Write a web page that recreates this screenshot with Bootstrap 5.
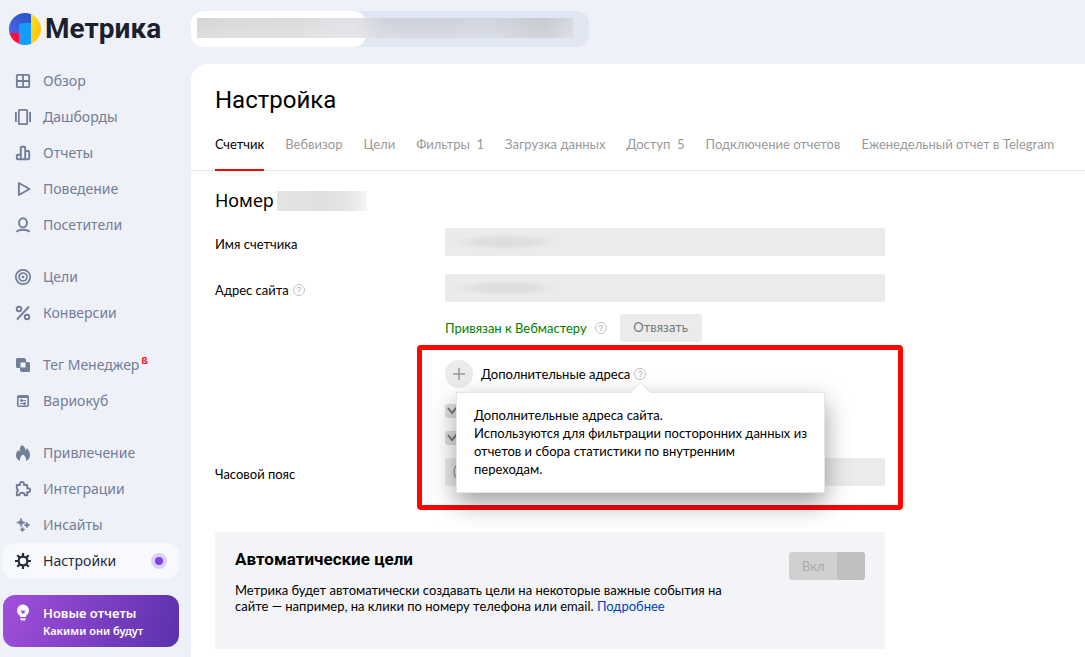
<!DOCTYPE html>
<html lang="ru">
<head>
<meta charset="utf-8">
<meta name="viewport" content="width=device-width, initial-scale=1">
<title>Метрика — Настройка</title>
<link rel="stylesheet" href="https://cdn.jsdelivr.net/npm/bootstrap@5.3.0/dist/css/bootstrap.min.css">
<style>
  body { background: #eef1f7; color: #000; font: 13px/18px Lato, Roboto, sans-serif; }
  a { text-decoration: none; }

  /* Sidebar */
  .sidebar { width: 191px; padding: 10px 12px 10px 3px; font-family: "Noto Sans", sans-serif; }
  .brand { height: 38px; gap: 4px; padding-left: 6px; margin-bottom: 15px; color: #1c1f2e; font: 700 28px/38px Roboto, sans-serif; }
  .brand:hover { color: #1c1f2e; }
  .side-group { margin-bottom: 16px; }
  .side-link { height: 36px; gap: 10px; padding: 0 12px 0 10px; border-radius: 12px; color: #727d98; font-size: 14px; }
  .side-link svg, .promo svg { width: 20px; height: 20px; flex: none; }
  .side-link.active { background: #f7f9fd; color: #262b3c; }
  .beta { top: 0; color: #f00020; font-size: 9px; font-weight: 700; line-height: 9px; margin: -10px 0 0 -8px; }
  .live-dot { width: 16px; height: 16px; border: 4px solid #dcd0f6; background: #7a45e5; }
  .promo { height: 52px; gap: 10px; padding: 8px 10px; border: 0; border-radius: 12px; color: #fff; text-align: left; background: linear-gradient(110deg, #a24fdb, #5a31ac); }
  .promo b { display: block; font-size: 13px; line-height: 20px; font-weight: 600; }
  .promo small { display: block; font-size: 11px; line-height: 15px; font-weight: 600; }

  /* Counter switcher above the panel */
  .counter-bar { width: 398px; height: 36px; margin: 11px 0 17px; border-radius: 12px; background: #e1e7f2; }
  .counter-current { width: 175px; border-radius: 12px; background: #fff; }
  .masked-name { position: absolute; inset: 7px 16px 9px 6px; background: linear-gradient(#0000, #fff3), linear-gradient(90deg, #d8d3d5, #d9d9da 8%, #d9dadb 25%, #dfe0e3 36%, #e0e1e6 42%, #cfd3dc 50%, #cdd1db 62%, #d0d5df 78%, #c6cacf 92%, #d3d8e0); }

  /* Settings panel */
  .panel { border-top-left-radius: 16px; background: #fff; }
  .panel h1 { margin: 0; padding: 21px 24px 0; font: 400 24px/30px Roboto, sans-serif; }
  .tabs { gap: 21px; padding: 0 24px; margin-top: 2px; border-bottom: 1px solid #e6e6e6; }
  .tabs .nav-link { padding: 17px 0 15px; margin-bottom: -1px; border-bottom: 2px solid transparent; color: #999; line-height: 20px; white-space: nowrap; }
  .tabs .nav-link.active { border-color: #f00; color: #000; }
  .form-area { width: 718px; max-width: 100%; padding: 19px 24px 8px; }
  .form-area h2 { margin: 0 0 17px; gap: 3px; font: 400 18px/21px "Noto Sans", sans-serif; }
  .masked-id { width: 90px; height: 20px; background: linear-gradient(90deg, #e4e4e4, #e0e0e0 50%, #e6e6e6 80%, #f5f5f5); }
  .field-row { min-height: 28px; margin-bottom: 18px; }
  .field-label { width: 230px; flex: none; padding-top: 4px; line-height: 24px; }
  .field-box { height: 28px; padding: 0 8px; border: 0; border-radius: 0; background-color: #ebebeb; font-size: 13px; }
  .field-box:disabled { background-color: #ebebeb; color: #888; opacity: 1; }
  .masked-value:disabled { background-image: radial-gradient(ellipse 54px 8px at 60px 50%, #dcdcdc, #dfdfdf 50%, #ebebeb); }
  .help { width: 12px; height: 12px; padding: 0; border: 1px solid #c3c3c3; border-radius: 50%; background: none; color: #aaa; font: 9px/10px "Liberation Sans", sans-serif; }
  .linked { color: #008000; }
  .btn-unlink { width: 82px; height: 28px; padding: 0; margin-left: 13px; border: 0; border-radius: 3px; font-size: 13px; }
  .btn-unlink:disabled { background: #ebebeb; color: #777; opacity: 1; }
  .btn-plus { width: 28px; height: 28px; padding: 0; border: 0; background: #ebebeb; }
  .mirror { display: block; width: 14px; height: 14px; margin: 0 0 13px; border: 0; border-radius: 3px; }
  .mirror:checked:disabled { opacity: 1; background: #dedede url("data:image/svg+xml,%3Csvg xmlns='http://www.w3.org/2000/svg' viewBox='0 0 14 14'%3E%3Cpath d='M3 4l4 5 6-7' fill='none' stroke='%23777' stroke-width='2'/%3E%3C/svg%3E") center/14px; }
  .plain-select:disabled { background-image: none; }

  /* Highlighted block: frame and hint lie over the fields */
  .highlight { margin-top: 18px; }
  .highlight::after { content: ""; position: absolute; inset: -15px -18px -24px 202px; border: 5px solid #fe0500; border-radius: 4px; pointer-events: none; }
  .hint { position: absolute; top: 32px; left: 241px; width: 369px; padding: 13px 16px 14px 17px; border: 1px solid #e5e5e5; background: #fff; box-shadow: 0 10px 24px rgba(0,0,0,.38); z-index: 2; }
  .hint::before { content: ""; position: absolute; left: 176px; top: -8px; width: 15px; height: 15px; border: solid #e5e5e5; border-width: 1px 0 0 1px; background: #fff; transform: rotate(45deg); }

  /* Automatic goals */
  .goals { margin-top: 46px; min-height: 117px; padding: 16px 20px; background: #f3f4f7; }
  .goals h3 { margin: 0 0 12px; font: 700 17px/22px Roboto, sans-serif; }
  .goals p { max-width: 500px; line-height: 16px; }
  .goals a { color: #04b; }
  .toggle { width: 76px; height: 28px; padding: 0; margin-top: 4px; border: 0; border-radius: 3px; overflow: hidden; background: #d0d0d0; color: #aaa; }
  .toggle i { width: 28px; height: 28px; border-radius: 3px; background: #bfbfbf; }
</style>
</head>
<body>
<div class="d-flex min-vh-100">
  <aside class="sidebar flex-shrink-0">
    <a href="#" class="brand d-flex align-items-center">
      <svg width="32" height="32" viewBox="0 0 32 32" aria-hidden="true">
        <defs>
          <clipPath id="disc"><circle cx="16" cy="16" r="16"/></clipPath>
          <linearGradient id="gb" x1="0" y1="1" x2="1" y2="0"><stop offset="0" stop-color="#4a66ea"/><stop offset="1" stop-color="#2b50c4"/></linearGradient>
          <linearGradient id="gy" x1="0" y1="0" x2="1" y2="1"><stop offset="0" stop-color="#ffe01a"/><stop offset="1" stop-color="#ffbd0a"/></linearGradient>
        </defs>
        <g clip-path="url(#disc)">
          <path fill="url(#gb)" d="M0 0h22v20H0z"/>
          <path fill="#fb0d3d" d="M0 20h12v12H0z"/>
          <path fill="url(#gy)" d="M22 0h10v32H22z"/>
          <path fill="#149cff" d="M10 14q0-4 4-4h8v22H10z"/>
        </g>
      </svg>
      Метрика
    </a>

    <nav aria-label="Разделы">
      <div class="side-group">
        <a href="#" class="side-link d-flex align-items-center"><svg viewBox="0 0 20 20" fill="none" stroke="currentColor" stroke-width="1.8"><rect x="3.8" y="3.8" width="12.4" height="12.4" rx="1"/><path d="M10 4v12M4 10h12"/></svg>Обзор</a>
        <a href="#" class="side-link d-flex align-items-center"><svg viewBox="0 0 20 20" fill="none" stroke="currentColor" stroke-width="1.8"><rect x="5.8" y="2.8" width="8.4" height="14.4" rx="1"/><path d="M2.9 5v10M17.1 5v10"/></svg>Дашборды</a>
        <a href="#" class="side-link d-flex align-items-center"><svg viewBox="0 0 20 20" fill="none" stroke="currentColor" stroke-width="1.9" stroke-linejoin="round"><path d="M7.8 16.2V4.8q0-1 1-1h2.4q1 0 1 1v11.4zM7.8 11.8h-3q-1 0-1 1v2.4q0 1 1 1h10.4q1 0 1-1V9q0-1-1-1h-3"/></svg>Отчеты</a>
        <a href="#" class="side-link d-flex align-items-center"><svg viewBox="0 0 20 20" fill="none" stroke="currentColor" stroke-width="1.9" stroke-linejoin="round"><path d="M5.900 4v12l10.600-6z"/></svg>Поведение</a>
        <a href="#" class="side-link d-flex align-items-center"><svg viewBox="0 0 20 20" fill="none" stroke="currentColor" stroke-width="1.9"><ellipse cx="10" cy="7.8" rx="4" ry="4.6"/><path d="M3.600 17c1.500-3 11.300-3 12.800 0"/></svg>Посетители</a>
      </div>
      <div class="side-group">
        <a href="#" class="side-link d-flex align-items-center"><svg viewBox="0 0 20 20" fill="none" stroke="currentColor" stroke-width="1.7"><circle cx="10" cy="10" r="7.2"/><circle cx="10" cy="10" r="4"/><circle cx="10" cy="10" r="1.3" fill="currentColor" stroke="none"/></svg>Цели</a>
        <a href="#" class="side-link d-flex align-items-center"><svg viewBox="0 0 20 20" fill="none" stroke="currentColor" stroke-width="1.9"><circle cx="6" cy="6" r="2.3"/><circle cx="14" cy="14" r="2.3"/><path d="M16 3.500L4 16.500"/></svg>Конверсии</a>
      </div>
      <div class="side-group">
        <a href="#" class="side-link d-flex align-items-center"><svg viewBox="0 0 20 20" fill="currentColor"><path fill-rule="evenodd" d="M4.500 3H11a2 2 0 0 1 2 2v2h2.500A1.500 1.500 0 0 1 17 8.500v7a1.500 1.500 0 0 1-1.500 1.500H9a2 2 0 0 1-2-2v-2H4.500A1.500 1.500 0 0 1 3 11.500v-7A1.500 1.500 0 0 1 4.500 3zM7.500 7.500v5h5v-5z"/></svg>Тег Менеджер<sup class="beta">ß</sup></a>
        <a href="#" class="side-link d-flex align-items-center"><svg viewBox="0 0 20 20" fill="none" stroke="currentColor" stroke-width="1.6"><rect x="4.800" y="4.800" width="10.400" height="10.400" rx="1"/><path d="M5 6h10" stroke-width="2"/><path d="M7 9.500h6M7 12.500h6" stroke-width="1"/><path d="M8.500 8v3M11.500 11v3" stroke-width="1.800"/></svg>Вариокуб</a>
      </div>
      <div class="side-group">
        <a href="#" class="side-link d-flex align-items-center"><svg viewBox="0 0 20 20" fill="currentColor"><path d="M8.800 2c2.400 1.200 3.700 3.200 3.800 5.400.7-.6 1-1.300 1.100-2.400 2 2 3.300 4.500 3.300 7 0 3-1.500 5-4 6 .5-2.600-.6-4.800-3-6.500-2.400 1.700-3.500 3.900-3 6.500-2.500-1-4-3-4-5.700 0-2.100.9-3.800 2-5.300.3 1 .7 1.500 1.400 1.800C6.500 6.500 7 4 8.800 2z"/></svg>Привлечение</a>
        <a href="#" class="side-link d-flex align-items-center"><svg viewBox="0 0 20 20" fill="none" stroke="currentColor" stroke-width="1.9" stroke-linejoin="round"><path d="M3.800 6H7c-.6-1.500.4-3 2-3s2.600 1.500 2 3h3.200v3.500c1.600-.6 3 .3 3 1.800s-1.400 2.400-3 1.800v3.100h-2.500c0-3.200-5.400-3.200-5.400 0H3.800V13c1.500 0 1.500-3 0-3z"/></svg>Интеграции</a>
        <a href="#" class="side-link d-flex align-items-center"><svg viewBox="0 0 20 20" fill="currentColor"><path d="M8 3q.4 4.100 4.500 4.500Q8.400 7.900 8 12 7.600 7.900 3.500 7.500 7.600 7.100 8 3zM14 7q.3 2.700 3 3-2.700.3-3 3-.3-2.700-3-3 2.700-.3 3-3zM9.500 12q.3 2.200 2.500 2.500-2.200.3-2.500 2.500-.3-2.200-2.500-2.500 2.200-.3 2.500-2.500z" stroke="currentColor" stroke-width=".6"/></svg>Инсайты</a>
        <a href="#" class="side-link active d-flex align-items-center" aria-current="page"><svg viewBox="0 0 20 20" fill="none" stroke="currentColor" stroke-width="2.2"><circle cx="10" cy="10" r="4.400"/><path d="M10 2v3M10 15v3M2 10h3M15 10h3M4.300 4.300l2.200 2.200M13.500 13.500l2.200 2.200M15.700 4.300l-2.200 2.200M6.500 13.500l-2.200 2.200"/></svg>Настройки<span class="live-dot rounded-circle ms-auto"></span></a>
      </div>
    </nav>
    <button type="button" class="promo d-flex w-100">
      <svg viewBox="0 0 20 20" fill="#fff"><path fill-rule="evenodd" d="M10 1.500a6 6 0 0 1 6 6c0 2.300-1.200 3.900-3 5.200V14H7v-1.300c-1.800-1.300-3-2.900-3-5.200a6 6 0 0 1 6-6zM7 7.500l1.500 1v2h3v-2l1.500-1H7zM7 15.200h6L12 17.500H8z"/></svg>
      <span><b>Новые отчеты</b><small>Какими они будут</small></span>
    </button>
  </aside>

  <div class="d-flex flex-column flex-grow-1">
    <div class="counter-bar d-flex position-relative">
      <div class="counter-current"></div>
      <span class="masked-name"></span>
    </div>

    <main class="panel flex-grow-1">
      <h1>Настройка</h1>
      <nav class="tabs nav flex-nowrap" aria-label="Настройки счетчика">
        <a class="nav-link active" href="#" aria-current="page">Счетчик</a>
        <a class="nav-link" href="#">Вебвизор</a>
        <a class="nav-link" href="#">Цели</a>
        <a class="nav-link" href="#">Фильтры&nbsp; 1</a>
        <a class="nav-link" href="#">Загрузка данных</a>
        <a class="nav-link" href="#">Доступ&nbsp; 5</a>
        <a class="nav-link" href="#">Подключение отчетов</a>
        <a class="nav-link" href="#">Еженедельный отчет в Telegram</a>
      </nav>

      <div class="form-area">
        <h2 class="d-flex align-items-center">Номер <span class="masked-id"></span></h2>

        <div class="field-row d-flex">
          <label class="field-label" for="name">Имя счетчика</label>
          <input id="name" class="form-control field-box masked-value" type="text" disabled>
        </div>
        <div class="field-row d-flex align-items-start mb-0">
          <div class="field-label d-flex align-items-center gap-1"><label for="site">Адрес сайта</label><button type="button" class="help" aria-label="Подсказка">?</button></div>
          <div class="flex-grow-1">
            <input id="site" class="form-control field-box masked-value" type="text" disabled>
            <div class="d-flex align-items-center mt-2 pt-1">
              <span class="linked">Привязан к Вебмастеру</span>
              <button type="button" class="help ms-2" aria-label="Подсказка">?</button>
              <button type="button" class="btn btn-unlink" disabled>Отвязать</button>
            </div>
          </div>
        </div>

        <section class="highlight position-relative">
          <div class="d-flex">
            <div class="field-label"></div>
            <div>
              <div class="d-flex align-items-center">
                <button type="button" class="btn btn-plus rounded-circle d-flex align-items-center justify-content-center" aria-label="Добавить адрес"><svg width="12" height="12" stroke="#999" stroke-width="1.5"><path d="M6 0v12M0 6h12"/></svg></button>
                <span class="ms-2">Дополнительные адреса</span>
                <button type="button" class="help ms-1" aria-label="Подсказка">?</button>
              </div>
              <div class="pt-3">
                <input type="checkbox" class="form-check-input mirror" aria-label="Первый адрес" checked disabled>
                <input type="checkbox" class="form-check-input mirror" aria-label="Второй адрес" checked disabled>
              </div>
            </div>
          </div>
          <div class="d-flex">
            <label class="field-label" for="tz">Часовой пояс</label>
            <select id="tz" class="form-select field-box plain-select" disabled><option>(</option></select>
          </div>
          <div class="hint" role="tooltip">Дополнительные адреса сайта.<br>Используются для фильтрации посторонних данных из отчетов и сбора статистики по внутренним<br>переходам.</div>
        </section>

        <section class="goals d-flex justify-content-between">
          <div>
            <h3>Автоматические цели</h3>
            <p class="mb-0">Метрика будет автоматически создавать цели на некоторые важные события на сайте — например, на клики по номеру телефона или email. <a href="#">Подробнее</a></p>
          </div>
          <button type="button" class="toggle d-flex align-items-center flex-shrink-0" role="switch" aria-checked="true" disabled><span class="flex-grow-1">Вкл</span><i></i></button>
        </section>
      </div>
    </main>
  </div>
</div>
<script src="https://cdn.jsdelivr.net/npm/bootstrap@5.3.0/dist/js/bootstrap.bundle.min.js"></script>
</body>
</html>
